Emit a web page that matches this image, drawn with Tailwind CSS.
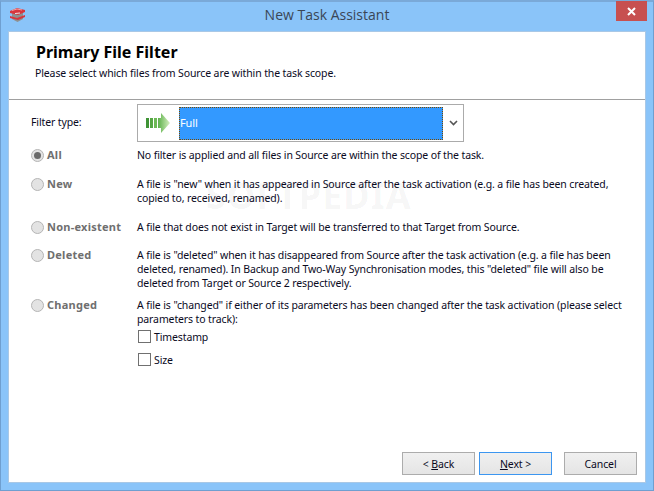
<!DOCTYPE html>
<html lang="en">
<head>
    <meta charset="UTF-8">
    <title>New Task Assistant</title>
    <script src="https://cdn.jsdelivr.net/npm/@tailwindcss/browser@4"></script>
</head>
<body class="w-[654px] h-[491px] overflow-hidden bg-[#8ac4f9] font-['Noto_Sans',sans-serif] text-[10.5px] tracking-[-0.12px] leading-[14px] text-[#0a0a1e]">
    <div class="flex flex-col w-full h-full border border-[#6f9fd0] border-t-2 border-t-[#7aa9d8]">
        <!-- title bar -->
        <div class="relative flex items-start justify-center h-[29px] shrink-0">
            <svg class="absolute left-[8px] top-[5px] w-[17px] h-[16px]" viewBox="0 0 17 16">
                <path d="M3 4 L8.5 6 L14 4 L14 12 L8.5 15 L3 12 Z" fill="#8f8f8f"/>
                <path d="M1 4 L8 1 L16 3 L16 5 L9 8 L1 6 Z" fill="#d8353d"/>
                <path d="M1 9 L8 11 L16 8 L16 10 L9 13 L1 11 Z" fill="#d8353d"/>
                <path d="M3 3.5 L8 2 L13 3" fill="none" stroke="#f5a0a0" stroke-width="1"/>
                <path d="M6 6.5 L11 6" stroke="#e8e8e8" stroke-width="1"/>
            </svg>
            <span class="mt-[3px] text-[14px] leading-[20px] tracking-normal text-[#3a4656] font-['Open_Sans',sans-serif]">New Task Assistant</span>
            <div class="absolute right-[6px] top-[-1px] flex items-center justify-center w-[31px] h-[20px] bg-[#c75050]">
                <svg class="w-[9px] h-[9px]" viewBox="0 0 9 9"><path d="M1 1 L8 8 M8 1 L1 8" stroke="#fff" stroke-width="2"/></svg>
            </div>
        </div>
        <!-- client area -->
        <div class="relative flex flex-col flex-1 mx-[7px] mb-[7px] bg-white border border-[#a9c8e6]">
            <!-- faint watermark under the text -->
            <span class="absolute left-[197px] top-[146px] text-[36px] leading-[36px] font-bold tracking-[1px] text-black/[0.045]">SOFTPEDIA</span>

            <div class="relative h-[68px] pl-[26px] pt-[9px] border-b border-[#a0a0a0] shrink-0">
                <h1 class="ml-[1px] text-[16px] leading-[22px] font-bold tracking-normal text-black">Primary File Filter</h1>
                <p class="mt-[3px]">Please select which files from Source are within the task scope.</p>
            </div>

            <div class="relative grid grid-cols-[106px_1fr] pl-[22px] pr-[10px]">
                <div class="pt-[15px]">Filter type:</div>
                <div class="flex items-center w-[327px] h-[38px] mt-[4px] border border-[#ababab] pl-[8px] pr-[5px]">
                    <svg class="w-[24px] h-[20px] shrink-0" viewBox="0 0 24 20">
                        <defs>
                            <linearGradient id="head" x1="0" y1="0" x2="1" y2="0">
                                <stop offset="0" stop-color="#5cb04a"/>
                                <stop offset="1" stop-color="#d6f0c0"/>
                            </linearGradient>
                        </defs>
                        <path d="M12 5 L15 5 L15 0 L24 10 L15 20 L15 15 L12 15 Z" fill="url(#head)"/>
                        <rect x="0" y="5" width="3" height="10" fill="#3f9335"/>
                        <rect x="4" y="5" width="3" height="10" fill="#56a644"/>
                        <rect x="8" y="5" width="3" height="10" fill="#6db956"/>
                    </svg>
                    <div class="flex items-center w-[264px] h-[33px] ml-[9px] bg-[#3399ff] border border-dotted border-[#7a4a00] text-white text-[11px]">Full</div>
                    <svg class="w-[9px] h-[6px] ml-[6px]" viewBox="0 0 9 6"><path d="M1 1 L4.5 4.5 L8 1" fill="none" stroke="#555" stroke-width="1.6"/></svg>
                </div>
            </div>

            <div class="relative grid grid-cols-[106px_1fr] pl-[22px] pr-[10px] mt-[6px]">
                <label class="flex items-start gap-[3px] h-[29px] text-[11px] tracking-[0.25px] font-bold text-[#6f6f6f]"><span class="flex items-center justify-center w-[13px] h-[13px] mt-[1px] rounded-full bg-[#e3e3e3] border border-[#b5b5b5]"><span class="w-[7px] h-[7px] rounded-full bg-[#6a6a6a]"></span></span>All</label>
                <p>No filter is applied and all files in Source are within the scope of the task.</p>

                <label class="flex items-start gap-[3px] h-[43px] text-[11px] tracking-[0.25px] font-bold text-[#6f6f6f]"><span class="w-[13px] h-[13px] mt-[1px] rounded-full bg-[#e3e3e3] border border-[#b5b5b5]"></span>New</label>
                <p>A file is "new" when it has appeared in Source after the task activation (e.g. a file has been created, copied to, received, renamed).</p>

                <label class="flex items-start gap-[3px] h-[28px] text-[11px] tracking-[0.25px] font-bold text-[#6f6f6f]"><span class="w-[13px] h-[13px] mt-[1px] rounded-full bg-[#e3e3e3] border border-[#b5b5b5]"></span>Non-existent</label>
                <p>A file that does not exist in Target will be transferred to that Target from Source.</p>

                <label class="flex items-start gap-[3px] h-[50px] text-[11px] tracking-[0.25px] font-bold text-[#6f6f6f]"><span class="w-[13px] h-[13px] mt-[1px] rounded-full bg-[#e3e3e3] border border-[#b5b5b5]"></span>Deleted</label>
                <p>A file is "deleted" when it has disappeared from Source after the task activation (e.g. a file has been deleted, renamed). In Backup and Two-Way Synchronisation modes, this "deleted" file will also be deleted from Target or Source 2 respectively.</p>

                <label class="flex items-start gap-[3px] text-[11px] tracking-[0.25px] font-bold text-[#6f6f6f]"><span class="w-[13px] h-[13px] mt-[1px] rounded-full bg-[#e3e3e3] border border-[#b5b5b5]"></span>Changed</label>
                <div>
                    <p>A file is "changed" if either of its parameters has been changed after the task activation (please select parameters to track):</p>
                    <div class="flex items-center gap-[3px] ml-[1px] -mt-[1px] h-[23px]"><span class="w-[13px] h-[13px] border border-[#707070] bg-white"></span>Timestamp</div>
                    <div class="flex items-center gap-[3px] ml-[1px] h-[23px]"><span class="w-[13px] h-[13px] border border-[#707070] bg-white"></span>Size</div>
                </div>
            </div>

            <!-- buttons -->
            <div class="absolute right-[8px] bottom-[7px] flex">
                <button class="w-[73px] h-[23px] border border-[#acacac] bg-gradient-to-b from-[#f0f0f0] to-[#e5e5e5]">&lt; <span class="underline">B</span>ack</button>
                <button class="w-[73px] h-[23px] ml-[4px] border border-[#3c96f0] bg-gradient-to-b from-[#f0f0f0] to-[#e5e5e5]"><span class="underline">N</span>ext &gt;</button>
                <button class="w-[73px] h-[23px] ml-[12px] border border-[#acacac] bg-gradient-to-b from-[#f0f0f0] to-[#e5e5e5]">Cancel</button>
            </div>
        </div>
    </div>
</body>
</html>
